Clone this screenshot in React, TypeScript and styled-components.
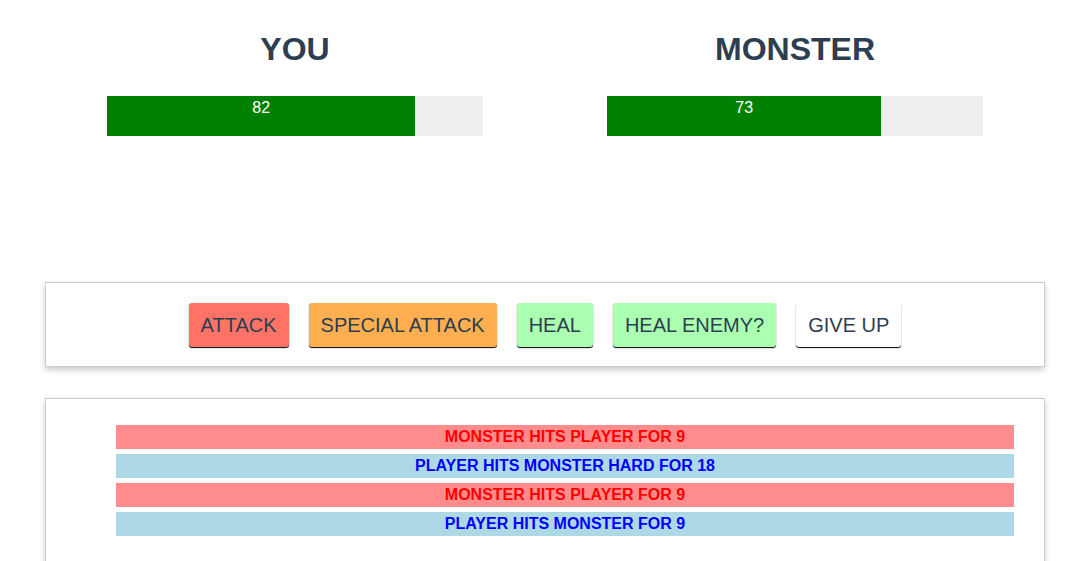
import React from "react";
import styled, { createGlobalStyle } from "styled-components";

const Global = createGlobalStyle`
  html, body { margin: 0; padding: 0; overflow: hidden; background: #fff; }
  body { font-family: "Liberation Sans", Arial, Helvetica, sans-serif; color: #2c3e50; }
  * { box-sizing: border-box; }
`;

const Page = styled.div`
  width: 1000px;
  margin-left: 45px;
  padding-top: 30px;
`;

const Row = styled.section`
  display: flex;
`;

const Column = styled.div`
  width: 50%;
  padding: 0 15px;
  text-align: center;
`;

const Title = styled.h1`
  margin: 0 0 28px;
  font-size: 32px;
  line-height: 38px;
  font-weight: bold;
  color: #2c3e50;
`;

const HealthBar = styled.div`
  width: 80%;
  height: 40px;
  margin: 0 auto;
  background: #eeeeee;
`;

const HealthFill = styled.div`
  height: 100%;
  background: #008000;
  color: #ffffff;
  font-size: 16px;
  line-height: 24px;
  text-align: center;
`;

const Panel = styled.section<{ $top: number }>`
  margin-top: ${(p) => p.$top}px;
  padding: 10px;
  border: 1px solid #cccccc;
  box-shadow: 0 3px 6px #cccccc;
  background: #ffffff;
  text-align: center;
`;

const Controls = styled.div`
  display: flex;
  justify-content: center;
`;

const ActionButton = styled.button<{ $bg: string }>`
  height: 44px;
  margin: 10px 10px 9px;
  padding: 0 12px;
  border: none;
  border-radius: 3px;
  background: ${(p) => p.$bg};
  box-shadow: 0 1px 1px #000000;
  color: #2c3e50;
  font-family: "Liberation Sans", Arial, Helvetica, sans-serif;
  font-size: 20px;
  line-height: 23px;
  text-transform: uppercase;
  cursor: pointer;
`;

const LogColumn = styled.div`
  padding: 0 15px;
`;

const LogList = styled.ul`
  list-style: none;
  margin: 16px 0 40px;
  padding: 0 0 0 40px;
  display: flex;
  flex-direction: column;
  gap: 5px;
`;

const LogItem = styled.li<{ $player: boolean }>`
  margin: 0 5px;
  height: 24px;
  line-height: 24px;
  font-size: 16px;
  font-weight: bold;
  text-transform: uppercase;
  text-align: center;
  color: ${(p) => (p.$player ? "#0000ff" : "#ff0000")};
  background: ${(p) => (p.$player ? "#add8e6" : "#ff8c8c")};
`;

const fighters = [
  { name: "You", health: 82 },
  { name: "Monster", health: 73 },
];

const actions = [
  { label: "Attack", bg: "#ff7367" },
  { label: "Special Attack", bg: "#ffaf4f" },
  { label: "Heal", bg: "#aaffb0" },
  { label: "Heal Enemy?", bg: "#aaffb0" },
  { label: "Give Up", bg: "#ffffff" },
];

const turns = [
  { player: false, text: "Monster hits player for 9" },
  { player: true, text: "Player hits monster hard for 18" },
  { player: false, text: "Monster hits player for 9" },
  { player: true, text: "Player hits monster for 9" },
];

export default function App() {
  return (
    <>
      <Global />
      <Page>
        <Row>
          {fighters.map((f) => (
            <Column key={f.name}>
              <Title>{f.name.toUpperCase()}</Title>
              <HealthBar>
                <HealthFill style={{ width: `${f.health}%` }}>{f.health}</HealthFill>
              </HealthBar>
            </Column>
          ))}
        </Row>
        <Panel $top={146}>
          <Controls>
            {actions.map((a) => (
              <ActionButton key={a.label} $bg={a.bg}>
                {a.label}
              </ActionButton>
            ))}
          </Controls>
        </Panel>
        <Panel $top={31}>
          <LogColumn>
            <LogList>
              {turns.map((t, i) => (
                <LogItem key={i} $player={t.player}>
                  {t.text}
                </LogItem>
              ))}
            </LogList>
          </LogColumn>
        </Panel>
      </Page>
    </>
  );
}
